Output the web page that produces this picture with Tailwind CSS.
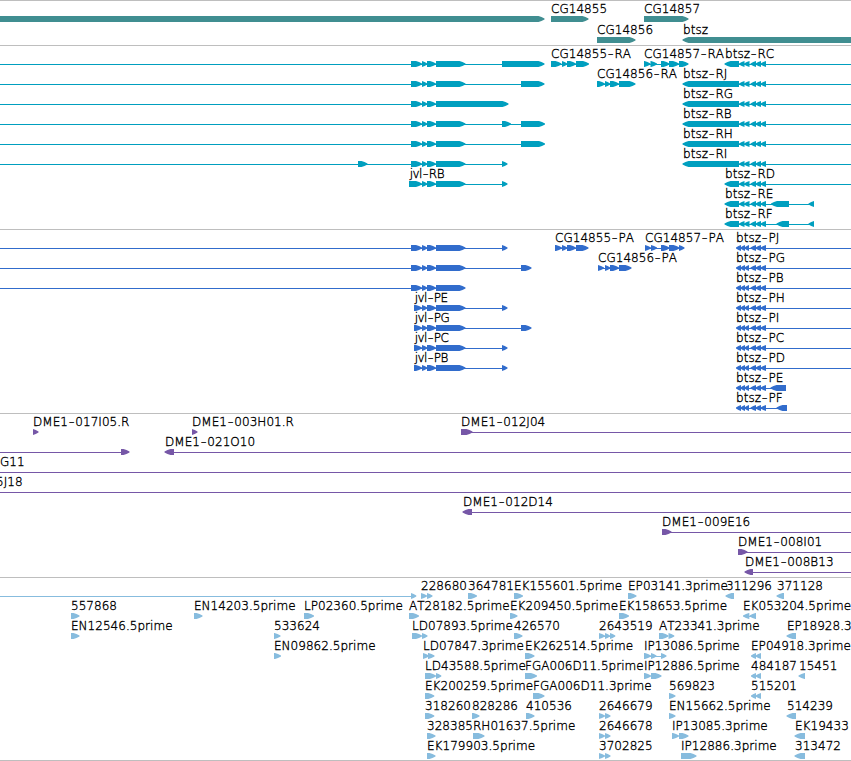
<!DOCTYPE html>
<html lang="en">
<head>
    <meta charset="UTF-8">
    <title>Genome Browser</title>
    <script src="https://cdn.jsdelivr.net/npm/@tailwindcss/browser@4"></script>
</head>
<body class="bg-white text-black overflow-hidden font-['DejaVu_Sans',sans-serif]">
    <main id="browser" class="flex flex-col w-[851px] h-[761px] overflow-hidden border-b border-[#bebebe]">
        <section id="genes" class="h-[45px] shrink-0 border-t border-[#bebebe] text-[#408e91]"></section>
        <section id="transcripts" class="h-[184px] shrink-0 border-t border-[#bebebe] text-[#009fbf]"></section>
        <section id="proteins" class="h-[184px] shrink-0 border-t border-[#bebebe] text-[#316ccc]"></section>
        <section id="bacs" class="h-[164px] shrink-0 border-t border-[#bebebe] text-[#7657a7]"></section>
        <section id="ests" class="h-[183px] shrink-0 border-t border-[#bebebe] text-[#87bcde]"></section>
    </main>

    <script>
        // row: t = labels [x, text], n = intron lines [x1, x2],
        // r = blocks pointing right [x1, x2], l = blocks pointing left
        const jvl = [[411, 422], [422, 427.3], [427, 436], [436, 465.5]];
        const jvlP = [[414, 422], [422, 427.3], [427, 436], [436, 465.5]];
        const last = [502, 507.5];
        const btszR = [[739, 744.5], [744, 749.5], [750.5, 756], [755.5, 761], [760.5, 766]];
        const btszLong = [[682.5, 739], ...btszR];
        const btszShort = [[724.5, 739], ...btszR];
        const btszP = [[736, 741], [740.5, 745], [744.5, 749], [750.5, 756], [755.5, 761], [760.5, 766]];

        const tracks = {
            genes: [
                { t: [[551, 'CG14855'], [644, 'CG14857']], r: [[-5, 544.5], [551, 588.5], [644, 688.5]] },
                { t: [[597, 'CG14856'], [683, 'btsz']], r: [[597, 635.5]], l: [[682.5, 860]] },
            ],
            transcripts: [
                { t: [[551, 'CG14855-RA'], [644, 'CG14857-RA'], [725, 'btsz-RC']], n: [[0, 502], [551, 586], [644, 685], [739, 851]],
                  r: [...jvl, [502, 544.5], [551, 561.5], [562, 567.3], [567, 576], [576, 589], [644, 650.5], [650.5, 657], [661, 669.5], [669, 679], [679, 688.5]], l: btszShort },
                { t: [[597, 'CG14856-RA'], [683, 'btsz-RJ']], n: [[0, 521], [597, 630], [739, 851]],
                  r: [...jvl, [521, 544.5], [597, 605], [605, 610.3], [610, 619], [619, 635.5]], l: btszLong },
                { t: [[683, 'btsz-RG']], n: [[0, 436], [739, 851]], r: [[411, 422], [422, 427.3], [427, 436], [436, 508.5]], l: btszLong },
                { t: [[683, 'btsz-RB']], n: [[0, 521], [739, 851]], r: [...jvl, [502, 511], [521, 545]], l: btszLong },
                { t: [[683, 'btsz-RH']], n: [[0, 521], [739, 851]], r: [...jvl, [521, 545]], l: btszLong },
                { t: [[683, 'btsz-RI']], n: [[0, 505], [739, 851]], r: [[358, 367.5], ...jvl, last], l: btszLong },
                { t: [[409, 'jvl-RB'], [725, 'btsz-RD']], n: [[410, 505], [739, 851]], r: [[409, 422], ...jvl.slice(1), last], l: btszShort },
                { t: [[725, 'btsz-RE']], n: [[739, 812]], l: [...btszShort, [771, 789], [808.5, 814]] },
                { t: [[725, 'btsz-RF']], n: [[739, 812]], l: [...btszShort, [776.5, 789], [808.5, 814]] },
            ],
            proteins: [
                { t: [[555, 'CG14855-PA'], [645, 'CG14857-PA'], [736, 'btsz-PJ']], n: [[0, 505], [555, 585], [645, 682], [739, 851]],
                  r: [...jvl, last, [555, 562], [562, 567.3], [567, 576], [576, 588.5], [645, 651], [651, 657], [661, 669.5], [669, 679.5], [679, 684.5]], l: btszP },
                { t: [[598, 'CG14856-PA'], [736, 'btsz-PG']], n: [[0, 521], [598, 625], [739, 851]],
                  r: [...jvl, [521, 531.5], [598, 604], [605, 610.3], [610, 619], [619, 631.5]], l: btszP },
                { t: [[736, 'btsz-PB']], n: [[0, 450], [739, 851]], r: jvl, l: btszP },
                { t: [[414, 'jvl-PE'], [736, 'btsz-PH']], n: [[415, 505], [739, 851]], r: [...jvlP, last], l: btszP },
                { t: [[414, 'jvl-PG'], [736, 'btsz-PI']], n: [[415, 521], [739, 851]], r: [...jvlP, [521, 531.5]], l: btszP },
                { t: [[414, 'jvl-PC'], [736, 'btsz-PC']], n: [[415, 505], [739, 851]], r: [...jvlP, last], l: btszP },
                { t: [[414, 'jvl-PB'], [736, 'btsz-PD']], n: [[415, 505], [739, 851]], r: [...jvlP, last], l: btszP },
                { t: [[736, 'btsz-PE']], n: [[739, 786]], l: [...btszP, [770.5, 786]] },
                { t: [[736, 'btsz-PF']], n: [[739, 786]], l: [...btszP, [776.5, 787]] },
            ],
            bacs: [
                { t: [[33, 'DME1-017I05.R'], [192, 'DME1-003H01.R'], [461, 'DME1-012J04']], n: [[468, 851]], r: [[33, 38.5], [192, 197.5], [461, 472.5]] },
                { t: [[165, 'DME1-021O10']], n: [[0, 126], [169, 851]], r: [[121, 129.5]], l: [[164.5, 174]] },
                { t: [[0, 'G11']], n: [[0, 851]] },
                { t: [[-4, '5J18']], n: [[0, 851]] },
                { t: [[463, 'DME1-012D14']], n: [[468, 851]], l: [[462.5, 472]] },
                { t: [[662, 'DME1-009E16']], n: [[668, 851]], r: [[662, 671.5]] },
                { t: [[738, 'DME1-008I01']], n: [[744, 851]], r: [[738, 747.5]] },
                { t: [[745, 'DME1-008B13']], n: [[749, 851]], l: [[744.5, 753]] },
            ],
            ests: [
                { t: [[421, '228680'], [468, '364781'], [514, 'EK155601.5prime'], [628, 'EP03141.3prime'], [726, '311296'], [777, '371128']], n: [[0, 412]],
                  r: [[411, 416.3], [421, 427], [427, 432.5], [468, 477], [514, 523], [628, 636.5]], l: [[725.5, 734], [776.5, 784]] },
                { t: [[71, '557868'], [194, 'EN14203.5prime'], [304, 'LP02360.5prime'], [409, 'AT28182.5prime'], [510, 'EK209450.5prime'], [619, 'EK158653.5prime'], [743, 'EK053204.5prime']], n: [[745, 753]],
                  r: [[71, 79.5], [194, 202.5], [304, 314], [409, 419], [510, 517.5], [619, 629]], l: [[743, 749.3], [749.5, 756]] },
                { t: [[71, 'EN12546.5prime'], [274, '533624'], [412, 'LD07893.5prime'], [514, '426570'], [599, '2643519'], [659, 'AT23341.3prime'], [787, 'EP18928.3']], n: [[600, 613]],
                  r: [[71, 79.5], [274, 280.5], [412, 422], [422, 427.5], [514, 522.5], [599, 605], [605, 610], [610, 615.3], [659, 668.5], [668.5, 674.3]], l: [[786.5, 796]] },
                { t: [[274, 'EN09862.5prime'], [423, 'LD07847.3prime'], [525, 'EK262514.5prime'], [644, 'IP13086.5prime'], [751, 'EP04918.3prime']], n: [[645, 664]],
                  r: [[274, 281], [423, 429], [428, 434.5], [525, 534.5], [644, 651], [651, 656.5], [661, 666.5]], l: [[751, 756], [755.5, 761]] },
                { t: [[425, 'LD43588.5prime'], [525, 'FGA006D11.5prime'], [644, 'IP12886.5prime'], [751, '484187'], [799, '15451']],
                  r: [[425, 436], [436, 441.3], [525, 537], [644, 651], [651, 661.5]], l: [[751, 756], [755.5, 761], [798.5, 805]] },
                { t: [[425, 'EK200259.5prime'], [533, 'FGA006D11.3prime'], [669, '569823'], [751, '515201']],
                  r: [[425, 434.3], [533, 544.5], [669, 675.5]], l: [[751, 756], [755.5, 761]] },
                { t: [[425, '318260'], [472, '828286'], [526, '410536'], [599, '2646679'], [669, 'EN15662.5prime'], [787, '514239']],
                  r: [[425, 434.3], [472, 479.5], [526, 534.5], [599, 605], [605, 610.5], [669, 675.5]], l: [[786.5, 796]] },
                { t: [[427, '328385'], [473, 'RH01637.5prime'], [599, '2646678'], [672, 'IP13085.3prime'], [795, 'EK19433']],
                  r: [[427, 435.5], [473, 484.5], [599, 605], [605, 610.5], [672, 679], [679, 688.5]], l: [[794.5, 805]] },
                { t: [[427, 'EK179903.5prime'], [599, '3702825'], [681, 'IP12886.3prime'], [795, '313472']],
                  r: [[427, 435.5], [599, 605], [605, 610.5], [681, 696.5]], l: [[794.5, 805]] },
            ],
        };

        function block(x1, x2, left) {
            const head = Math.min(6, x2 - x1);
            const tip = left ? x1 : x2;
            const neck = left ? x1 + head : x2 - head;
            const back = left ? x2 : x1;
            const mid = (neck + tip) / 2;
            return `<polygon points="${back},15 ${neck},15 ${mid},16 ${tip},17.5 ${tip},18.5 ${mid},20 ${neck},21 ${back},21" fill="currentColor"/>`;
        }

        // hyphens are drawn wider than the font's own
        function label(x, text) {
            const s = text.replace('-', '<tspan class="text-[16px]" dx="0.8" dy="1">-</tspan><tspan dx="0.8" dy="-1">') + (text.includes('-') ? '</tspan>' : '');
            const spacing = text.startsWith('jvl') ? 'tracking-[-0.5px]' : 'tracking-[0.03px]';
            const left = text.startsWith('jvl') ? x + 0.7 : x;
            return `<text x="${left}" y="12" class="fill-black stroke-black stroke-[0.35px] text-[12px] font-extralight [font-kerning:none] ${spacing}">${s}</text>`;
        }

        function row(d, pitch) {
            let s = '';
            for (const [a, b] of d.n || []) s += `<rect x="${a}" y="18" width="${b - a}" height="1" fill="currentColor"/>`;
            for (const [a, b] of d.r || []) s += block(a, b, false);
            for (const [a, b] of d.l || []) s += block(a, b, true);
            for (const [x, text] of d.t || []) s += label(x, text);
            return `<svg class="block w-full overflow-visible ${pitch}">${s}</svg>`;
        }

        for (const id in tracks) {
            const pitch = id === 'genes' ? 'h-[21px]' : 'h-5';
            document.getElementById(id).innerHTML = tracks[id].map(d => row(d, pitch)).join('');
        }
    </script>
</body>
</html>
